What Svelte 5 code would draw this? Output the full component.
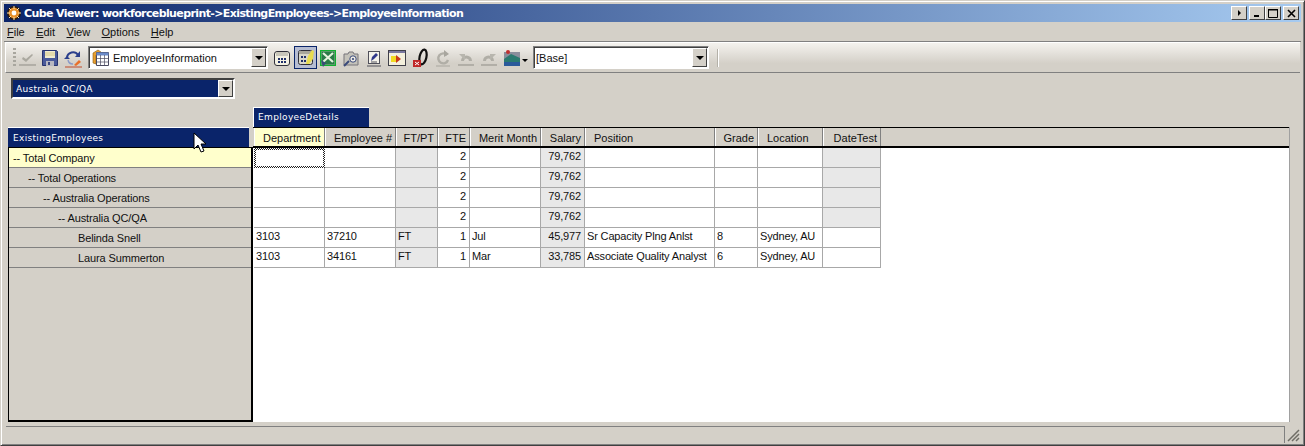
<script>
	const columns = [
		{ label: 'Department', width: 71, align: 'left', active: true },
		{ label: 'Employee #', width: 71, align: 'left' },
		{ label: 'FT/PT', width: 42, align: 'right', shaded: true },
		{ label: 'FTE', width: 32, align: 'right', num: true },
		{ label: 'Merit Month', width: 71, align: 'right' },
		{ label: 'Salary', width: 44, align: 'right', num: true, shaded: true },
		{ label: 'Position', width: 130, align: 'left' },
		{ label: 'Grade', width: 43, align: 'right' },
		{ label: 'Location', width: 65, align: 'left' },
		{ label: 'DateTest', width: 58, align: 'right' }
	];

	const rows = [
		['', '', '', '2', '', '79,762', '', '', '', ''],
		['', '', '', '2', '', '79,762', '', '', '', ''],
		['', '', '', '2', '', '79,762', '', '', '', ''],
		['', '', '', '2', '', '79,762', '', '', '', ''],
		['3103', '37210', 'FT', '1', 'Jul', '45,977', 'Sr Capacity Plng Anlst', '8', 'Sydney, AU', ''],
		['3103', '34161', 'FT', '1', 'Mar', '33,785', 'Associate Quality Analyst', '6', 'Sydney, AU', '']
	];

	const tree = [
		{ name: '-- Total Company', indent: 4, current: true },
		{ name: '-- Total Operations', indent: 19 },
		{ name: '-- Australia Operations', indent: 34 },
		{ name: '-- Australia QC/QA', indent: 49 },
		{ name: 'Belinda Snell', indent: 69 },
		{ name: 'Laura Summerton', indent: 69 }
	];

	const gridCols = columns.map((c) => c.width + 'px').join(' ');
</script>

<div class="window">
	<div class="titlebar">
		<svg class="appicon" width="16" height="16" viewBox="0 0 16 16">
			<circle cx="8" cy="8" r="7" fill="#2a1a10" />
			<circle cx="8" cy="8" r="5.4" fill="#e8902a" />
			<circle cx="8" cy="8" r="2.4" fill="#fff" />
			<path d="M8 1v3M8 12v3M1 8h3M12 8h3M3 3l2 2M11 11l2 2M13 3l-2 2M3 13l2-2" stroke="#fbe3b0" stroke-width="1" />
		</svg>
		<span class="title">Cube Viewer: workforceblueprint-&gt;ExistingEmployees-&gt;EmployeeInformation</span>
		<div class="winbtns">
			<button class="winbtn gap">
				<svg width="8" height="8" viewBox="0 0 8 8"><path d="M3 1l3 3-3 3z" fill="#000" /></svg>
			</button>
			<button class="winbtn">
				<svg width="8" height="8" viewBox="0 0 8 8"><path d="M1 6h5v2H1z" fill="#000" /></svg>
			</button>
			<button class="winbtn">
				<svg width="10" height="10" viewBox="0 0 10 10"><path d="M.5 1.5h9v8h-9zM.5 1v1h9V1" fill="none" stroke="#000" /></svg>
			</button>
			<button class="winbtn gap2">
				<svg width="9" height="9" viewBox="0 0 9 9"><path d="M1 1l7 7M8 1L1 8" stroke="#000" stroke-width="1.6" /></svg>
			</button>
		</div>
	</div>

	<div class="menubar">
		<span><u>F</u>ile</span>
		<span><u>E</u>dit</span>
		<span><u>V</u>iew</span>
		<span><u>O</u>ptions</span>
		<span><u>H</u>elp</span>
	</div>

	<div class="toolbar">
		<div class="grip"></div>
		<svg class="tool" width="22" height="22" viewBox="0 0 22 22">
			<path d="M6 12l4 3 7-7-1-1-6 5-3-2z" fill="#aaa89f" />
			<path d="M3 18h17" stroke="#8f8d86" />
		</svg>
		<svg class="tool" width="22" height="22" viewBox="0 0 22 22">
			<path d="M3.5 3.5h14l1 1v14h-15z" fill="#4a5a9a" stroke="#28346e" />
			<path d="M6 4h10v7H6z" fill="#f0eccf" />
			<path d="M6 6h10M6 8h10" stroke="#d8c888" />
			<path d="M7 14h8v5H7z" fill="#b8b8c0" />
			<path d="M9 15h2v3H9z" fill="#3a4680" />
		</svg>
		<svg class="tool" width="22" height="22" viewBox="0 0 22 22">
			<path d="M5 11a6 6 0 0 1 11-3" fill="none" stroke="#2b3f8c" stroke-width="2" />
			<path d="M5 9l-3 3h6z" fill="#2b3f8c" />
			<path d="M18 4v6h-5z" fill="#2b3f8c" />
			<path d="M6 13a5 5 0 0 0 5 4" fill="none" stroke="#8a9ac8" stroke-width="1.4" />
			<path d="M12 18l5-5 2 2-5 4z" fill="#e8702a" />
			<path d="M3 20h17" stroke="#c04a2a" />
		</svg>

		<div class="combo view-combo">
			<svg class="comboicon" width="17" height="17" viewBox="0 0 17 17">
				<path d="M1 4l5-3 3 2v3H4v9l-3-1z" fill="#e8a030" stroke="#8a5a10" stroke-width=".6" />
				<path d="M4.5 3.5h12v13h-12z" fill="#fff" stroke="#4a4a60" />
				<path d="M4.5 3.5h12v3h-12z" fill="#6a8ac8" />
				<path d="M8.5 6v10M12.5 6v10M5 9.5h11M5 13h11" stroke="#4a4a60" stroke-width=".7" />
			</svg>
			<span class="combotext">EmployeeInformation</span>
			<span class="arrow"><i></i></span>
		</div>

		<svg class="tool first" width="22" height="22" viewBox="0 0 22 22">
			<rect x="3.5" y="4.5" width="15" height="14" rx="2.5" fill="#f4f1e2" stroke="#30303a" />
			<path d="M5 5h12v4H5z" fill="#c8c6ba" />
			<path d="M7 11h2v2H7zM10 11h2v2h-2zM13 11h2v2h-2zM7 14h2v2H7zM10 14h2v2h-2zM13 14h2v2h-2z" fill="#20306a" />
		</svg>
		<span class="tool-on">
			<svg width="21" height="22" viewBox="0 0 21 22">
				<rect x="3.5" y="4.5" width="14" height="14" rx="2" fill="#d8d6c8" stroke="#30303a" />
				<path d="M4 5h13v3H4z" fill="#a8a69a" />
				<path d="M6 10h2v2H6zM9 10h2v2H9zM6 14h2v2H6zM9 14h2v2H9z" fill="#20306a" />
				<path d="M11 18l2-8 4-6 2 1-1 8-4 5z" fill="#e8dc50" />
			</svg>
		</span>
		<svg class="tool" width="22" height="22" viewBox="0 0 22 22">
			<rect x="3.5" y="3.5" width="15" height="15" fill="#5a9a6a" stroke="#10b030" />
			<path d="M5 5h12v12H5z" fill="#2a7a48" />
			<path d="M6 6l10 9M16 6L6 15" stroke="#e4f2dc" stroke-width="2.2" />
			<path d="M4 13l5 3-3 4z" fill="#3a4a7a" />
		</svg>
		<svg class="tool" width="22" height="22" viewBox="0 0 22 22">
			<path d="M4 7h4l1-2h4l1 2h4v11H4z" fill="#c4c2ba" stroke="#77757a" />
			<circle cx="13" cy="12" r="3.2" fill="#eceae4" stroke="#3a4a7a" />
			<circle cx="13" cy="12" r="1.1" fill="#3a4a7a" />
			<path d="M4 19l5-5" stroke="#3a4a7a" stroke-width="2" />
		</svg>
		<svg class="tool" width="22" height="22" viewBox="0 0 22 22">
			<rect x="5.5" y="4.5" width="11" height="12" fill="#f4f2ea" stroke="#50505a" />
			<path d="M8 14l1-4 4-4 2 2-4 4z" fill="#30388a" />
			<path d="M8 15h6M4 19h14" stroke="#50505a" />
		</svg>
		<svg class="tool" width="22" height="22" viewBox="0 0 22 22">
			<rect x="2.5" y="3.5" width="17" height="15" fill="#f4f0dc" stroke="#40404a" />
			<path d="M3 4h16v2H3z" fill="#7a78a0" />
			<path d="M5 9h6v6H5z" fill="#f2da20" />
			<path d="M10 8l5 4-5 4z" fill="#c83a1a" />
		</svg>
		<svg class="tool" width="22" height="22" viewBox="0 0 22 22">
			<ellipse cx="14" cy="10" rx="3.4" ry="7.5" fill="none" stroke="#101010" stroke-width="2.2" transform="rotate(12 14 10)" />
			<rect x="4" y="13" width="8" height="7" fill="#c02828" />
			<path d="M6 15l4 3M10 15l-4 3" stroke="#fff" />
		</svg>
		<svg class="tool" width="22" height="22" viewBox="0 0 22 22">
			<path d="M15 8a5 5 0 1 0 1 5" fill="none" stroke="#b0aea6" stroke-width="2.4" />
			<path d="M12 3v7l5-3z" fill="#a8a69e" />
			<path d="M4 19h14" stroke="#a8a69e" />
		</svg>
		<svg class="tool" width="22" height="22" viewBox="0 0 22 22">
			<path d="M6 14a5.5 5.5 0 0 1 11 0h-3a2.5 2.5 0 0 0-5 0z" fill="#b0aea6" />
			<path d="M4 7h6v6z" fill="#b8b6ae" />
			<path d="M3 18h16" stroke="#8f8d86" />
		</svg>
		<svg class="tool" width="22" height="22" viewBox="0 0 22 22">
			<path d="M5 14a5.5 5.5 0 0 1 11 0h-3a2.5 2.5 0 0 0-5 0z" fill="#b0aea6" />
			<path d="M18 7h-6v6z" fill="#b8b6ae" />
			<path d="M3 18h16" stroke="#8f8d86" />
		</svg>
		<svg class="tool palette" width="28" height="22" viewBox="0 0 28 22">
			<path d="M3 5h16v14H3z" fill="#8a8e9c" />
			<path d="M3 12l7-5 9 4v8H3z" fill="#2a7a70" />
			<path d="M3 15h16v4H3z" fill="#2a5a9a" />
			<circle cx="7" cy="5" r="2" fill="#c03030" />
			<path d="M21 12h6l-3 3z" fill="#000" />
		</svg>

		<div class="combo base-combo">
			<span class="combotext">[Base]</span>
			<span class="arrow"><i></i></span>
		</div>
		<div class="sep"></div>
	</div>

	<div class="body">
		<div class="filter">
			<span>Australia QC/QA</span>
			<span class="arrow"><i></i></span>
		</div>

		<div class="tabs">
			<div class="tab">EmployeeDetails</div>
		</div>

		<div class="panes">
			<div class="left">
				<div class="left-head">ExistingEmployees</div>
				<div class="tree">
					{#each tree as node}
						<div class="node" class:current={node.current} style="padding-left: {node.indent}px">{node.name}</div>
					{/each}
				</div>
			</div>

			<div class="right">
				<div class="head" style="grid-template-columns: {gridCols}">
					{#each columns as col}
						<div class="th" class:active={col.active} class:r={col.align === 'right'}>{col.label}</div>
					{/each}
				</div>
				<div class="rows" style="grid-template-columns: {gridCols}">
					{#each rows as row, i}
						{#each row as cell, j}
							<div
								class="td"
								class:shaded={columns[j].shaded || (j === 9 && i < 4)}
								class:r={columns[j].num}
								class:focus={i === 0 && j === 0}
							>{cell}</div>
						{/each}
					{/each}
				</div>
			</div>

			<svg class="cursor" width="14" height="22" viewBox="0 0 14 22">
				<path d="M1 1v16l4-4 3 7 3-1-3-7h5z" fill="#fff" stroke="#000" />
			</svg>
		</div>
	</div>

	<div class="statusbar">
		<div class="status-main"></div>
		<svg class="resize" width="14" height="14" viewBox="0 0 14 14">
			<path d="M13 2L2 13M13 6l-7 7M13 10l-3 3" stroke="#6f6d66" stroke-width="1.5" />
		</svg>
	</div>
</div>

<style>
	:global(body) {
		margin: 0;
		background: #d4d0c8;
	}
	.window {
		width: 1305px;
		height: 446px;
		box-sizing: border-box;
		display: flex;
		flex-direction: column;
		background: #d4d0c8;
		border: 1px solid;
		border-color: #d4d0c8 #404040 #404040 #d4d0c8;
		box-shadow: inset 1px 1px 0 #fff, inset -1px -1px 0 #808080;
		padding: 3px 3px 2px;
		font-family: Tahoma, "Liberation Sans", sans-serif;
		font-size: 11px;
		color: #111;
		overflow: hidden;
	}
	.titlebar {
		height: 18px;
		flex: none;
		display: flex;
		align-items: center;
		background: linear-gradient(to right, #0a246a, #a6caf0);
		padding-left: 2px;
	}
	.appicon {
		flex: none;
	}
	.title {
		margin-left: 2px;
		color: #fff;
		font-family: "DejaVu Sans", sans-serif;
		font-weight: 700;
		font-size: 11px;
		letter-spacing: -0.61px;
		white-space: nowrap;
	}
	.winbtns {
		margin-left: auto;
		display: flex;
		padding-right: 2px;
	}
	.winbtn {
		width: 16px;
		height: 14px;
		padding: 0;
		display: flex;
		align-items: center;
		justify-content: center;
		background: #d4d0c8;
		border: 1px solid;
		border-color: #fff #404040 #404040 #fff;
	}
	.winbtn.gap {
		margin-right: 2px;
	}
	.winbtn.gap2 {
		margin-left: 2px;
	}
	.menubar {
		height: 19px;
		flex: none;
		display: flex;
		align-items: center;
		gap: 11.4px;
		padding: 0 3px;
		font-size: 11px;
		border-bottom: 1px solid #808080;
	}
	.toolbar {
		height: 29px;
		flex: none;
		display: flex;
		align-items: center;
		padding-left: 7px;
		border-top: 1px solid #fff;
		border-left: 1px solid #fff;
		border-bottom: 1px solid #808080;
		background: linear-gradient(to bottom, #f4f2ee, #d4d0c8 70%);
		margin-left: 1px;
		margin-right: 1px;
	}
	.grip {
		width: 3px;
		height: 20px;
		background: repeating-linear-gradient(to bottom, #a8a69e 0 2px, transparent 2px 4px);
	}
	.tool {
		flex: none;
		margin-right: 1px;
	}
	.tool.first {
		margin-left: 3px;
	}
	.tool-on {
		flex: none;
		display: flex;
		box-sizing: border-box;
		width: 23px;
		height: 23px;
		margin-right: 0;
		padding-left: 1px;
		background: #b6bdd2;
		outline: 1px solid #0a246a;
		outline-offset: -1px;
	}
	.combo {
		flex: none;
		height: 23px;
		box-sizing: border-box;
		display: flex;
		align-items: center;
		background: #fff;
		border: 1px solid;
		border-color: #808080 #fff #fff #808080;
		box-shadow: inset 1px 1px 0 #404040;
	}
	.view-combo {
		width: 180px;
		margin-left: 3px;
	}
	.base-combo {
		width: 176px;
		margin-left: 3px;
	}
	.comboicon {
		margin-left: 3px;
		flex: none;
	}
	.combotext {
		flex: 1;
		padding-left: 4px;
		font-size: 11px;
		white-space: nowrap;
	}
	.base-combo .combotext {
		padding-left: 2px;
	}
	.arrow {
		flex: none;
		width: 15px;
		height: 19px;
		margin-right: 1px;
		display: flex;
		align-items: center;
		justify-content: center;
		background: #d4d0c8;
		box-sizing: border-box;
		border: 1px solid;
		border-color: #fff #404040 #404040 #fff;
	}
	.arrow i {
		width: 0;
		height: 0;
		border: 4px solid transparent;
		border-top: 4px solid #000;
		border-bottom: 0;
	}
	.sep {
		width: 1px;
		height: 18px;
		margin-left: 8px;
		background: #b4b1a8;
		box-shadow: 1px 0 0 #fff;
	}
	.body {
		flex: 1;
		display: flex;
		flex-direction: column;
		min-height: 0;
		padding-left: 4px;
	}
	.filter {
		width: 224px;
		height: 21px;
		margin: 5px 0 0 3px;
		box-sizing: border-box;
		display: flex;
		align-items: center;
		justify-content: space-between;
		background: #0a246a;
		color: #fff;
		border: 2px solid;
		border-color: #404040 #fff #fff #404040;
		padding-left: 3px;
		font-family: "DejaVu Sans", sans-serif;
		font-size: 9px;
		letter-spacing: 0.3px;
	}
	.filter .arrow {
		height: 17px;
		margin-right: 0;
	}
	.tabs {
		display: flex;
		margin-top: 8px;
		padding-left: 245px;
		height: 20px;
		flex: none;
	}
	.tab {
		width: 116px;
		height: 20px;
		box-sizing: border-box;
		background: #0a246a;
		color: #fff;
		border-top: 1px solid #fff;
		border-left: 1px solid #fff;
		padding: 4px 0 0 4px;
		font-family: "DejaVu Sans", sans-serif;
		font-size: 9px;
		letter-spacing: 0.35px;
	}
	.panes {
		position: relative;
		display: flex;
		height: 295px;
		flex: none;
	}
	.left {
		width: 245px;
		flex: none;
		display: flex;
		flex-direction: column;
	}
	.left-head {
		height: 20px;
		width: 241px;
		box-sizing: border-box;
		background: #0a246a;
		color: #fff;
		border-top: 1px solid #fff;
		padding: 5px 0 0 5px;
		font-family: "DejaVu Sans", sans-serif;
		font-size: 9px;
		letter-spacing: 0.32px;
		flex: none;
	}
	.tree {
		flex: 1;
		border: 1px solid #000;
		border-width: 1px 2px 2px 1px;
		background: #d4d0c8;
		letter-spacing: -0.12px;
	}
	.node {
		height: 19px;
		line-height: 20px;
		border-bottom: 1px solid #808080;
		white-space: nowrap;
	}
	.node.current {
		background: #ffffcc;
	}
	.right {
		flex: 1;
		display: flex;
		flex-direction: column;
		background: #fff;
		margin-right: 12px;
		min-width: 0;
		border-bottom: 1px solid #fff;
		box-shadow: 1px 0 0 #a0a0a0;
	}
	.head {
		display: grid;
		grid-auto-rows: 18px;
		height: 21px;
		box-sizing: border-box;
		flex: none;
		background: #d4d0c8;
		border-top: 1px solid #000;
		border-bottom: 2px solid #000;
		padding-left: 1px;
	}
	.th {
		height: 18px;
		background: #d4d0c8;
		border-right: 1px solid #808080;
		border-left: 1px solid #fff;
		line-height: 19px;
		padding-top: 1px;
		padding-left: 8px;
		white-space: nowrap;
		box-sizing: border-box;
	}
	.th.r {
		text-align: right;
		padding: 1px 3px 0 0;
	}
	.th.active {
		background: #ffffcc;
	}
	.rows {
		display: grid;
		grid-auto-rows: 20px;
		padding-left: 1px;
		letter-spacing: -0.15px;
	}
	.td {
		box-sizing: border-box;
		border-right: 1px solid #a8a8a8;
		border-bottom: 1px solid #a8a8a8;
		padding: 0 3px 0 2px;
		line-height: 17px;
		white-space: nowrap;
		overflow: hidden;
		background: #fff;
	}
	.td.shaded {
		background: #e8e8e8;
	}
	.td.r {
		text-align: right;
	}
	.td.focus {
		border: 2px solid transparent;
		background: linear-gradient(#fff, #fff) padding-box,
			repeating-conic-gradient(#222 0 25%, #fff 0 50%) 0 0 / 2px 2px border-box;
	}
	.cursor {
		position: absolute;
		left: 185px;
		top: 5px;
	}
	.statusbar {
		flex: none;
		height: 17px;
		display: flex;
		align-items: center;
		margin-top: 1px;
		padding-left: 2px;
	}
	.status-main {
		flex: 1;
		height: 16px;
		border-top: 1px solid #808080;
		border-right: 1px solid #808080;
		margin-right: 1px;
	}
	.resize {
		flex: none;
		margin-right: 1px;
	}
</style>
